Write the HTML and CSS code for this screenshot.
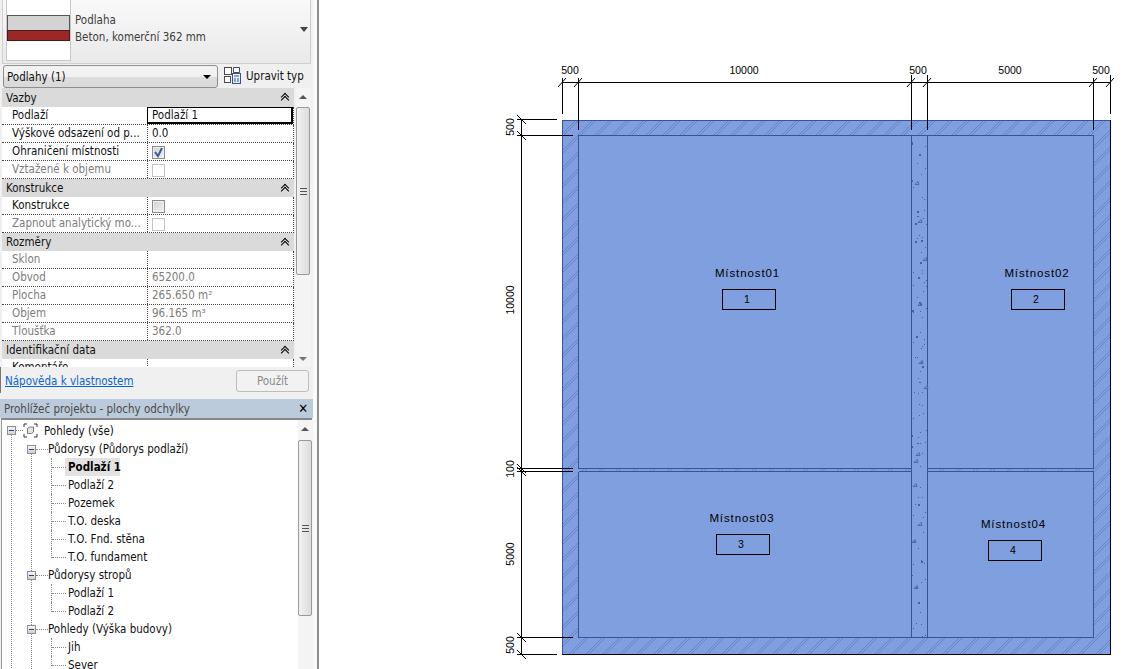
FILE: index.html
```html
<!DOCTYPE html>
<html lang="cs">
<head>
<meta charset="utf-8">
<title>Revit</title>
<link rel="stylesheet" href="styles.css">
</head>
<body>
<div class="app">
  <aside class="side">
    <div class="preview">
      <div class="swatch"><div class="sw-gray"></div><div class="sw-red"></div></div>
      <div class="preview-text"><div>Podlaha</div><div>Beton, komerční 362 mm</div></div>
      <span class="preview-arrow"></span>
    </div>
    <div class="selector">
      <div class="combo"><span class="combo-text">Podlahy (1)</span><i class="combo-arrow"></i></div>
      <svg class="type-icon" width="17" height="18" viewBox="0 0 17 18"><g fill="#fff" stroke="#4a4a4a"><rect x="0.5" y="1.5" width="7" height="7"/><path d="M9.5 1.5h6v5h-6z"/><rect x="0.5" y="10.5" width="6" height="6"/></g><rect x="8.5" y="7.5" width="8" height="10" fill="#e8eef6" stroke="#33558f"/><path d="M10 10h5M10 13h2M13 13h2M10 15h2M13 15h2" stroke="#33558f"/></svg>
      <span class="type-label">Upravit typ</span>
    </div>
    <div class="props">
      <div class="grid">
        <div class="sec sec-first">Vazby<i class="chev"></i></div>
        <div class="row"><div class="k">Podlaží</div><div class="v v-active">Podlaží 1</div></div>
        <div class="row"><div class="k">Výškové odsazení od p...</div><div class="v">0.0</div></div>
        <div class="row"><div class="k">Ohraničení místnosti</div><div class="v"><span class="cb cb-on"><svg width="11" height="11" viewBox="0 0 11 11"><path d="M2 5l3 4 4-8" fill="none" stroke="#3d5a9c" stroke-width="2"/></svg></span></div></div>
        <div class="row off"><div class="k">Vztažené k objemu</div><div class="v"><span class="cb cb-dis"></span></div></div>
        <div class="sec">Konstrukce<i class="chev"></i></div>
        <div class="row"><div class="k">Konstrukce</div><div class="v"><span class="cb"></span></div></div>
        <div class="row off"><div class="k">Zapnout analytický mo...</div><div class="v"><span class="cb cb-dis"></span></div></div>
        <div class="sec">Rozměry<i class="chev"></i></div>
        <div class="row off"><div class="k">Sklon</div><div class="v"></div></div>
        <div class="row off"><div class="k">Obvod</div><div class="v">65200.0</div></div>
        <div class="row off"><div class="k">Plocha</div><div class="v">265.650 m²</div></div>
        <div class="row off"><div class="k">Objem</div><div class="v">96.165 m³</div></div>
        <div class="row off"><div class="k">Tloušťka</div><div class="v">362.0</div></div>
        <div class="sec">Identifikační data<i class="chev"></i></div>
        <div class="row"><div class="k">Komentáře</div><div class="v"></div></div>
      </div>
      <div class="sbar sbar-props">
        <span class="arrow-up"></span>
        <div class="thumb thumb-props"><span class="grip"></span></div>
        <span class="arrow-down"></span>
      </div>
    </div>
    <div class="footer">
      <a class="help" href="#">Nápověda k vlastnostem</a>
      <button class="apply" type="button">Použít</button>
    </div>
    <div class="pb-head"><span>Prohlížeč projektu - plochy odchylky</span><b class="close">✕</b></div>
    <div class="pb">
      <div class="tree">
        <ul class="t0">
          <li><div class="node root"><i class="exp"></i><svg class="view-ico" width="15" height="15" viewBox="0 0 15 15"><path d="M1 4V1h3M11 1h3v3M14 11v3h-3M4 14H1v-3" fill="none" stroke="#333"/><path d="M4.500 5.500l2-1.500h4v5l-2 1.500h-4z" fill="#e4e4e4" stroke="#777"/></svg><span>Pohledy (vše)</span></div>
            <ul class="t1">
              <li><div class="node"><i class="exp"></i><span>Půdorysy (Půdorys podlaží)</span></div>
                <ul class="t2">
                  <li><div class="node"><span class="cur">Podlaží 1</span></div></li>
                  <li><div class="node"><span>Podlaží 2</span></div></li>
                  <li><div class="node"><span>Pozemek</span></div></li>
                  <li><div class="node"><span>T.O. deska</span></div></li>
                  <li><div class="node"><span>T.O. Fnd. stěna</span></div></li>
                  <li><div class="node"><span>T.O. fundament</span></div></li>
                </ul>
              </li>
              <li><div class="node"><i class="exp"></i><span>Půdorysy stropů</span></div>
                <ul class="t2">
                  <li><div class="node"><span>Podlaží 1</span></div></li>
                  <li><div class="node"><span>Podlaží 2</span></div></li>
                </ul>
              </li>
              <li><div class="node"><i class="exp"></i><span>Pohledy (Výška budovy)</span></div>
                <ul class="t2">
                  <li><div class="node"><span>Jih</span></div></li>
                  <li><div class="node"><span>Sever</span></div></li>
                </ul>
              </li>
            </ul>
          </li>
        </ul>
      </div>
      <div class="sbar sbar-tree">
        <span class="arrow-up"></span>
        <div class="thumb thumb-tree"><span class="grip"></span></div>
      </div>
    </div>
  </aside>
  <main class="canvas">
    <svg class="plan" width="814" height="669" viewBox="319 0 814 669">
      <defs>
        <pattern id="hatch" width="17" height="17" patternUnits="userSpaceOnUse" x="562" y="120">
          <path d="M-1 18L18 -1M-1 1L1 -1M16 18L18 16M-1 15L15 -1M13 18L18 13" fill="none" stroke="#5a79c2" stroke-width="0.7"/>
        </pattern>
      </defs>
      <rect class="fill" x="562" y="120" width="549" height="534"/>
      <rect x="562" y="120" width="549" height="534" fill="url(#hatch)"/>
      <rect class="fill" x="578" y="135" width="334" height="334"/>
      <rect class="fill" x="927" y="135" width="167" height="334"/>
      <rect class="fill" x="578" y="471" width="334" height="167"/>
      <rect class="fill" x="927" y="471" width="167" height="167"/>
      <rect class="fill" x="911" y="135" width="17" height="503"/>
      <g class="wall">
        <path d="M562.500 654V120.500H1110"/>
        <path d="M578.500 468.500V135.500H1093.500V468.500H927.500M911.500 468.500H578.500M578.500 471.500H911.500M927.500 471.500H1093.500V637.500H578.500V471.500M911.500 135V638M927.500 135V638"/>
      </g>
      <path class="speck" d="M912 144.500h1M920 155.500h1M925 146.500h1M917 163.500h1M925 168.500h1M921 174.500h1M913 187.500h1M922 197.500h1M924 199.500h1M924 210.500h1M917 216.500h2M923 218.500h1M926 224.500h1M915 224.500h1M919 235.500h1M922 237.500h1M917 238.500h1M915 242.500h1M925 247.500h1M921 252.500h1M925 260.500h1M922 270.500h1M913 272.500h1M922 273.500h1M926 280.500h1M924 282.500h1M926 286.500h1M913 285.500h1M923 291.500h1M917 297.500h1M920 304.500h2M926 308.500h1M920 311.500h1M913 312.500h1M922 317.500h1M920 332.500h1M917 337.500h1M924 339.500h1M913 342.500h1M922 346.500h1M924 344.500h1M921 348.500h1M917 357.500h1M915 357.500h1M921 362.500h1M923 367.500h1M920 371.500h1M918 378.500h1M919 382.500h2M914 392.500h1M918 393.500h1M922 392.500h1M919 404.500h1M922 405.500h1M913 418.500h1M919 415.500h1M923 413.500h1M926 430.500h1M920 432.500h1M918 437.500h1M917 443.500h2M925 442.500h1M920 443.500h1M922 453.500h1M920 466.500h1M920 487.500h1M918 497.500h1M922 497.500h1M915 504.500h1M913 515.500h1M923 517.500h1M925 512.500h1M923 532.500h1M914 541.500h1M918 548.500h1M921 560.500h1M924 563.500h1M913 564.500h1M912 575.500h1M921 582.500h1M916 587.500h1M925 579.500h1M920 612.500h1M916 623.500h1M921 624.500h1M913 628.500h1M922 636.500h1M925 635.500h1"/>
      <path class="speck big" d="M912 143h1M919 155h2M912 181h1M917 212h2M915 224h2M921 241h2M920 263h2M915 242h2M918 278h2M919 303h2M912 311h2M916 337h2M922 367h2M912 436h1M912 447h1M918 505h2M921 562h2M918 603h2"/>
      <path class="tri" d="M918 181.500l-3 3h4zM921 219.500l-3 3h4zM926 257.500l-3 3h4zM921 302.500l-3 3h4zM922 360.500l-3 3h4zM927 385.500l-3 3h4zM919 452.500l-3 3h4zM917 459.500l-3 3h4zM916 483.500l-3 3h4zM921 522.500l-3 3h4zM915 539.500l-3 3h4zM917 585.500l-3 3h4z"/>
      <path class="dim" d="M562 82.500H1110M562.500 78V114M578.500 78V130M911.500 75V130M927.500 75V130M1093.500 78V130M1110.500 75V114M521.500 120V654M517 119.500H557M517 135.500H573M517 468.500H573M517 471.500H573M517 637.500H573M517 654.500H557"/>
      <path class="edge" d="M562 654.500H1111M1110.500 120V655"/>
      <path class="tick" d="M558 87L566 78M574 87L582 78M907 87L915 78M923 87L931 78M1089 87L1097 78M1106 87L1114 78M517 115L526 124M517 131L526 140M517 464L526 473M517 467L526 476M517 633L526 642M517 650L526 659"/>
      <g class="dtext">
        <text x="570" y="74">500</text>
        <text x="744" y="74">10000</text>
        <text x="918" y="74">500</text>
        <text x="1010" y="74">5000</text>
        <text x="1101" y="74">500</text>
        <text transform="translate(514 127) rotate(-90)">500</text>
        <text transform="translate(514 300) rotate(-90)">10000</text>
        <text transform="translate(514 469) rotate(-90)">100</text>
        <text transform="translate(514 554) rotate(-90)">5000</text>
        <text transform="translate(514 645) rotate(-90)">500</text>
      </g>
      <g class="rooms">
        <text x="747.500" y="277">Místnost01</text>
        <text x="1037" y="277">Místnost02</text>
        <text x="742" y="522">Místnost03</text>
        <text x="1013.500" y="528">Místnost04</text>
      </g>
      <g class="tags">
        <rect x="722.500" y="289.500" width="53" height="20"/>
        <rect x="1011.500" y="289.500" width="53" height="20"/>
        <rect x="716.500" y="534.500" width="53" height="20"/>
        <rect x="988.500" y="540.500" width="53" height="20"/>
      </g>
      <g class="tagnum">
        <text x="747" y="303">1</text>
        <text x="1036" y="303">2</text>
        <text x="741" y="548">3</text>
        <text x="1013" y="554">4</text>
      </g>
    </svg>
  </main>
</div>
</body>
</html>
```
FILE: styles.css
```css
* { box-sizing: border-box; }
html, body { margin: 0; padding: 0; height: 669px; overflow: hidden; background: #fff; }
body { font-family: "DejaVu Sans Condensed", "DejaVu Sans", sans-serif; font-stretch: condensed; font-size: 11.500px; color: #111; }
.app { display: flex; height: 669px; width: 1133px; }
.side { width: 319px; flex: none; height: 669px; overflow: hidden; background: linear-gradient(90deg, #f0f0f0 313px, #fafafa 313px); border-right: 2px solid #8d8d8d; padding-right: 4px; }
.canvas { flex: 1; height: 669px; overflow: hidden; }
.plan { display: block; }

.preview { height: 64px; margin: 0 2px 0 2px; border: 1px solid #cfcfcf; border-top: 0; background: linear-gradient(#f9f9f9, #e9e9e9); display: flex; position: relative; padding-left: 3px; }
.swatch { width: 65px; height: 61px; background: #fff; border: 1px solid #c8c8c8; border-top: 0; padding-top: 15px; flex: none; }
.sw-gray { height: 15px; background: #d3d3d3; border: 1px solid #555; border-bottom: 0; }
.sw-red { height: 11px; background: #9c2727; border: 1px solid #4b1a1a; }
.preview-text { margin-left: 4px; padding-top: 12px; line-height: 17px; color: #3d3d3d; }
.preview-arrow { position: absolute; right: 2px; top: 27px; border: 4px solid transparent; border-top: 5px solid #444; border-bottom: 0; }

.selector { height: 24px; display: flex; align-items: center; padding-left: 3px; }
.combo { width: 215px; height: 23px; border: 1px solid #8e8e8e; border-radius: 3px; background: linear-gradient(#f2f2f2 50%, #dedede 50%, #d8d8d8); display: flex; align-items: center; justify-content: space-between; padding: 0 6px 0 3px; }
.combo-text { padding-top: 2px; }
.combo-arrow { border: 4px solid transparent; border-top: 4px solid #000; border-bottom: 0; margin-top: 2px; }
.type-icon { margin-left: 6px; flex: none; margin-top: -3px; }
.type-label { margin-left: 5px; white-space: nowrap; }

.props { height: 279px; display: flex; overflow: hidden; padding-left: 2px; }
.grid { width: 292px; height: 279px; overflow: hidden; background: #fff; flex: none; }
.sec { height: 18px; background: #dadada; line-height: 19px; padding-left: 4px; position: relative; }
.sec-first { height: 19px; line-height: 20px; }
.chev { position: absolute; right: 5px; top: 0; width: 8px; height: 18px; }
.chev::before, .chev::after { content: ""; position: absolute; left: 1px; width: 5px; height: 5px; border-left: 1px solid #000; border-top: 1px solid #000; transform: rotate(45deg); }
.chev::before { top: 6px; }
.chev::after { top: 9px; }
.row { height: 18px; display: grid; grid-template-columns: 145px 1fr; border-bottom: 1px dotted #444; border-right: 1px dotted #444; line-height: 17px; }
.k { padding-left: 10px; white-space: nowrap; overflow: hidden; }
.v { padding-left: 4px; border-left: 1px dotted #444; display: flex; align-items: center; position: relative; }
.v-active { border: 2px solid #000; border-width: 1px 2px 2px 1px; margin-top: 0; height: 17px; background: #fff; }
.off { color: #7d7d7d; }
.cb { width: 13px; height: 13px; margin-top: 1px; border: 1px solid #8a8a8a; background: linear-gradient(135deg, #d0d0d0, #f4f4f4); display: block; box-shadow: inset 0 0 0 1px #f0f0f0; }
.cb-on svg { display: block; margin: 0; }
.cb-dis { background: #fff; border-color: #c4c4c4; box-shadow: none; }

.sbar { background: #f4f4f4; flex: none; position: relative; }
.sbar-props { width: 15px; height: 279px; margin-left: 2px; }
.sbar-tree { width: 15px; height: 251px; position: absolute; left: 296px; top: 0; }
.arrow-up { position: absolute; left: 3px; top: 7px; border: 4px solid transparent; border-bottom: 4px solid #555; border-top: 0; }
.arrow-down { position: absolute; left: 3px; bottom: 6px; border: 4px solid transparent; border-top: 4px solid #777; border-bottom: 0; }
.thumb { position: absolute; left: 0; width: 14px; border: 1px solid #9a9a9a; border-radius: 2px; background: linear-gradient(90deg, #f2f2f2, #dcdcdc); display: flex; align-items: center; justify-content: center; }
.thumb-props { top: 19px; height: 168px; }
.thumb-tree { top: 20px; height: 176px; }
.grip { width: 7px; height: 7px; border-top: 1px solid #555; border-bottom: 1px solid #555; position: relative; }
.grip::after { content: ""; position: absolute; left: 0; right: 0; top: 2px; height: 1px; background: #555; }

.footer { height: 26px; display: flex; align-items: center; justify-content: space-between; padding: 1px 4px 0 4px; border-left: 1px solid #777; }
.help { color: #0a66cc; text-decoration: underline; }
.apply { width: 73px; height: 22px; padding: 0; border: 1px solid #bdbdbd; border-radius: 3px; background: #f2f2f2; color: #8a8a8a; font: inherit; }

.pb-head { height: 19px; margin-top: 6px; background: #bccbdb; color: #4a4a4a; display: flex; justify-content: space-between; align-items: center; padding: 1px 5px 0 4px; }
.close { color: #000; font-size: 13px; font-weight: bold; line-height: 14px; }
.pb { height: 251px; position: relative; background: #fff; border: 1px solid #999; border-top: 2px solid #888; border-bottom: 0; margin-left: 1px; margin-right: 1px; }
.tree { height: 250px; overflow: hidden; padding-top: 1px; }
ul { list-style: none; margin: 0; padding: 0; }
li { position: relative; }
.node { height: 18px; display: flex; align-items: center; white-space: nowrap; position: relative; }
.root { height: 19px; }
.t0 > li > .node { padding-left: 5px; }
.t1 > li > .node { padding-left: 25px; }
.t2 > li > .node { padding-left: 66px; }
.t1 > li > .node > span { margin-left: 12px; }
.t0 > li::before { content: ""; position: absolute; left: 9px; top: 14px; bottom: 0; border-left: 1px dotted #888; }
.t1 > li::after { content: ""; position: absolute; left: 29px; top: 14px; bottom: -5px; border-left: 1px dotted #888; }
.t2 > li::before { content: ""; position: absolute; left: 49px; top: 0; bottom: 0; border-left: 1px dotted #888; }
.t2 > li:last-child::before { bottom: 8px; }
.t1 > li > .node::before { content: ""; position: absolute; left: 34px; top: 9px; width: 12px; border-top: 1px dotted #888; }
.t2 > li > .node::before { content: ""; position: absolute; left: 50px; top: 9px; width: 14px; border-top: 1px dotted #888; }
.t0 > li > .node::before { content: ""; position: absolute; left: 14px; top: 9px; width: 7px; border-top: 1px dotted #888; }
.exp { width: 9px; height: 9px; border: 1px solid #8f8f8f; background: linear-gradient(#f6f6f6, #d0d0d0); position: relative; flex: none; z-index: 1; display: block; }
.exp::after { content: ""; position: absolute; left: 1px; right: 1px; top: 3px; height: 1px; background: #26408a; }
.view-ico { margin-left: 7px; margin-right: 6px; flex: none; position: relative; }
.cur { font-weight: bold; background: #e2e2e2; padding: 0 3px; margin-left: -3px; height: 18px; line-height: 18px; display: block; width: 55px; color: #000; }

.fill { fill: #7f9fde; }
.wall { fill: none; stroke: #365595; stroke-width: 1; shape-rendering: crispEdges; }
.speck { fill: none; stroke: #45619f; stroke-width: 1; shape-rendering: crispEdges; }
.big { stroke-width: 2; }
.tri { fill: none; stroke: #4e6aa9; stroke-width: 1; }
.dim, .edge { fill: none; stroke: #000; stroke-width: 1; shape-rendering: crispEdges; }
.tick { fill: none; stroke: #000; stroke-width: 1; }
.dtext text { font-family: "Liberation Sans", sans-serif; font-size: 10.500px; text-anchor: middle; fill: #000; }
.rooms text { font-family: "Liberation Sans", sans-serif; font-size: 11.500px; letter-spacing: 0.9px; text-anchor: middle; fill: #000; }
.tags rect { fill: none; stroke: #000; shape-rendering: crispEdges; }
.tagnum text { font-family: "Liberation Sans", sans-serif; font-size: 10.500px; text-anchor: middle; fill: #000; }
```
